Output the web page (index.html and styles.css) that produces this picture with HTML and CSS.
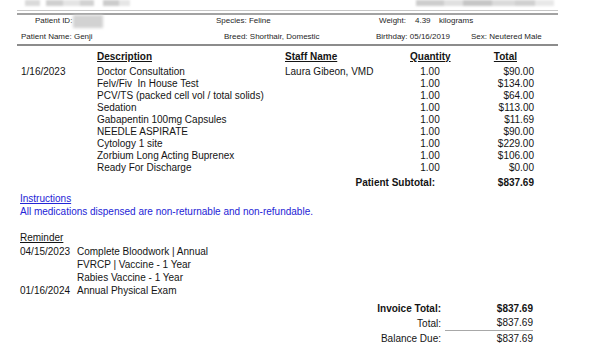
FILE: index.html
```html
<!DOCTYPE html>
<html lang="en">
<head>
  <meta charset="UTF-8">
  <meta name="viewport" content="width=device-width, initial-scale=1">
  <title>Invoice - Genji</title>
  <link rel="stylesheet" href="styles.css">
</head>
<body>

  <!-- Blurred clinic header strip -->
  <div class="top-strip">
    <div class="smudge smudge-left"></div>
    <div class="smudge smudge-right"></div>
  </div>

  <div class="rule rule-thin"></div>
  <div class="rule rule-thick"></div>

  <!-- Patient details -->
  <div class="patient-row row-one">
    <span class="cell id-label">Patient ID:</span>
    <span class="cell id-value"><span class="redacted"></span></span>
    <span class="cell species">Species: Feline</span>
    <span class="cell weight">Weight:</span>
    <span class="cell weight-num">4.39</span>
    <span class="cell">kilograms</span>
  </div>
  <div class="patient-row row-two">
    <span class="cell name">Patient Name: Genji</span>
    <span class="cell breed">Breed: Shorthair, Domestic</span>
    <span class="cell birthday">Birthday: 05/16/2019</span>
    <span class="cell">Sex: Neutered Male</span>
  </div>

  <div class="rule rule-divider"></div>

  <!-- Line items -->
  <div class="items">
    <div class="head"></div>
    <div class="head">Description</div>
    <div class="head">Staff Name</div>
    <div class="head qty">Quantity</div>
    <div class="head total-head">Total</div>

    <div>1/16/2023</div>
    <div class="desc-list">
      <div>Doctor Consultation</div>
      <div>Felv/Fiv&nbsp; In House Test</div>
      <div>PCV/TS (packed cell vol / total solids)</div>
      <div>Sedation</div>
      <div>Gabapentin 100mg Capsules</div>
      <div>NEEDLE ASPIRATE</div>
      <div>Cytology 1 site</div>
      <div>Zorbium Long Acting Buprenex</div>
      <div>Ready For Discharge</div>
    </div>
    <div>Laura Gibeon, VMD</div>
    <div class="qty">
      <div>1.00</div><div>1.00</div><div>1.00</div>
      <div>1.00</div><div>1.00</div><div>1.00</div>
      <div>1.00</div><div>1.00</div><div>1.00</div>
    </div>
    <div class="money">
      <div>$90.00</div><div>$134.00</div><div>$64.00</div>
      <div>$113.00</div><div>$11.69</div><div>$90.00</div>
      <div>$229.00</div><div>$106.00</div><div>$0.00</div>
    </div>

    <div class="subtotal-label">Patient Subtotal:</div>
    <div class="money subtotal-value">$837.69</div>
  </div>

  <!-- Instructions -->
  <div class="instructions">
    <div class="link">Instructions</div>
    <div>All medications dispensed are non-returnable and non-refundable.</div>
  </div>

  <!-- Reminders -->
  <div class="reminders">
    <div class="reminder-title">Reminder</div>
    <div class="reminder-list">
      <div>04/15/2023</div><div>Complete Bloodwork | Annual</div>
      <div></div><div>FVRCP | Vaccine - 1 Year</div>
      <div></div><div>Rabies Vaccine - 1 Year</div>
      <div>01/16/2024</div><div>Annual Physical Exam</div>
    </div>
  </div>

  <!-- Totals -->
  <div class="totals">
    <div class="strong">Invoice Total:</div>
    <div class="strong value">$837.69</div>
    <div>Total:</div>
    <div class="value underlined">$837.69</div>
    <div>Balance Due:</div>
    <div class="value">$837.69</div>
  </div>

</body>
</html>
```

FILE: styles.css
```css
/* Reset */
* {
  margin: 0;
  padding: 0;
  box-sizing: border-box;
}

body {
  width: 612px;
  height: 345px;
  overflow: hidden;
  background: #fff;
  color: #141414;
  font-family: "Liberation Sans", Arial, sans-serif;
  font-size: 10px;
  line-height: 12px;
}

/* Blurred top strip */
.top-strip {
  height: 6px;
  position: relative;
}

.smudge {
  position: absolute;
  top: 0;
  height: 6px;
  filter: blur(1px);
}

.smudge-left {
  left: 25px;
  width: 105px;
  background: linear-gradient(90deg, #dadada 0 14%, #fff 14% 20%, #cfcfcf 20% 36%, #e4e4e4 36% 52%, #d2d2d2 52% 66%, #fff 66% 74%, #cccccc 74% 90%, #e6e6e6 90%);
}

.smudge-right {
  left: 416px;
  width: 138px;
  background: linear-gradient(90deg, #cdcdcd 0 20%, #e0e0e0 20% 34%, #c6c6c6 34% 55%, #dadada 55% 72%, #d0d0d0 72% 86%, #e8e8e8 86%);
}

/* Horizontal rules */
.rule {
  margin-left: 17px;
  width: 541px;
}

.rule-thin {
  margin-top: 4px;
  height: 1px;
  background: #c6c6c6;
}

.rule-thick {
  margin-top: 2px;
  height: 2px;
  background: #a2a2a2;
}

.rule-divider {
  margin-top: 2px;
  height: 2px;
  background: #8c8c8c;
}

/* Patient details */
.patient-row {
  display: flex;
  align-items: center;
  font-size: 8px;
  line-height: 10px;
  color: #262626;
}

.row-one {
  padding-left: 35px;
  margin-top: 1px;
}

.row-two {
  margin-top: 6px;
  padding-left: 21px;
}

.id-label { width: 38px; }
.id-value { width: 143px; display: flex; }
.species { width: 163px; }
.weight { width: 36px; }
.weight-num { width: 24px; }

.name { width: 203px; }
.breed { width: 152px; }
.birthday { width: 95px; }

.redacted {
  width: 30px;
  height: 13px;
  margin: -1.5px 0;
  background: #d2d2d2;
  filter: blur(1.5px);
}

/* Line items */
.items {
  display: grid;
  grid-template-columns: 76px 188px 125px 40px 84px;
  padding-left: 21px;
  margin-top: 5px;
}

.head {
  font-weight: bold;
  text-decoration: underline;
  margin-bottom: 3px;
}

.qty {
  text-align: center;
}

.total-head {
  text-align: right;
  padding-right: 17px;
}

.money {
  text-align: right;
}

.subtotal-label {
  grid-column: 3 / 5;
  text-align: right;
  padding-right: 15px;
  font-weight: bold;
  margin-top: 3px;
}

.subtotal-value {
  font-weight: bold;
  margin-top: 3px;
}

/* Instructions */
.instructions {
  margin-top: 3px;
  padding-left: 20px;
  color: #2424d6;
  line-height: 13px;
}

.link {
  text-decoration: underline;
}

/* Reminders */
.reminders {
  margin-top: 14px;
  padding-left: 20px;
}

.reminder-title {
  text-decoration: underline;
}

.reminder-list {
  display: grid;
  grid-template-columns: 57px auto;
  justify-content: start;
  line-height: 13px;
  margin-top: 0.5px;
}

/* Totals */
.totals {
  display: grid;
  grid-template-columns: 80px 92px;
  margin-left: 361px;
  margin-top: 4px;
  line-height: 15px;
}

.totals > div {
  text-align: right;
}

.strong {
  font-weight: bold;
}

.underlined {
  margin-left: 4px;
  border-bottom: 1px solid #a8a8a8;
  line-height: 14px;
}
```
